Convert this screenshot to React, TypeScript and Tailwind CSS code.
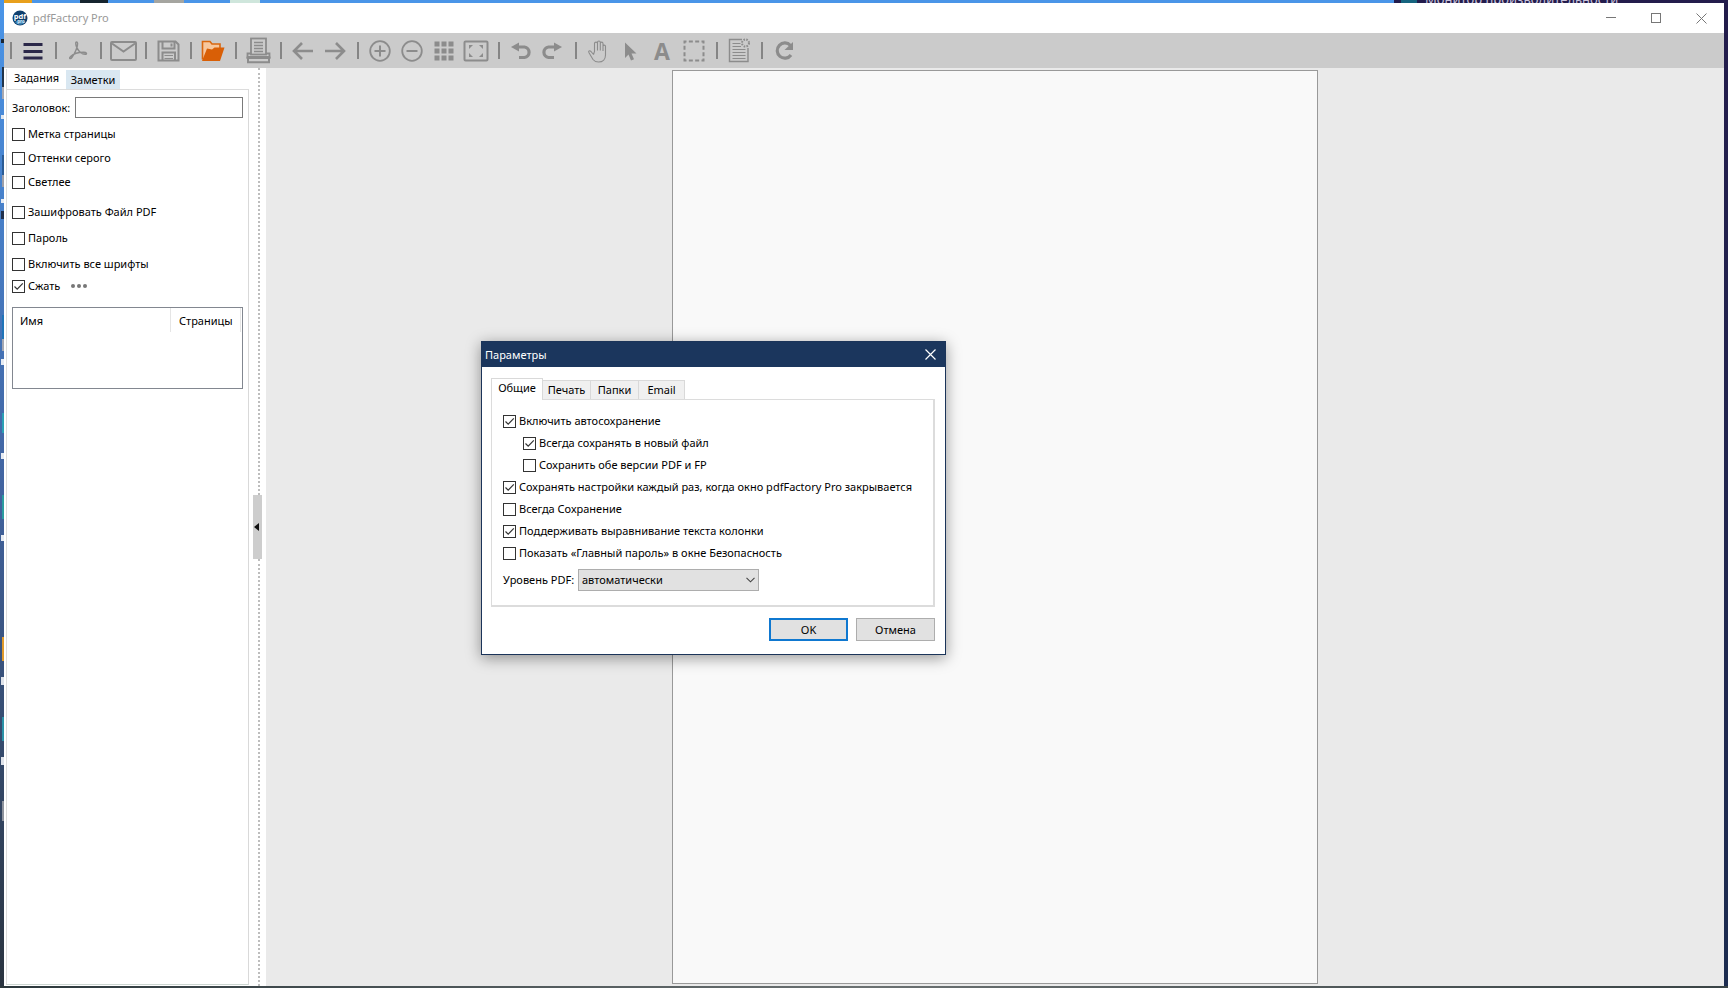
import React, { useState } from 'react';

const ICON = '#8c8c8c';

type CheckProps = {
  id: string;
  label: string;
  checked?: boolean;
  className?: string;
};

// Square checkbox with the thin Windows 10 tick
const Check: React.FC<CheckProps> = ({ id, label, checked = false, className = '' }) => {
  const [on, setOn] = useState<boolean>(checked);
  return (
    <div className={`flex items-center gap-[3px] ${className}`}>
      <span className="relative flex">
        <input
          id={id}
          type="checkbox"
          checked={on}
          onChange={(e) => setOn(e.target.checked)}
          className="h-[13px] w-[13px] appearance-none border border-[#333333] bg-white"
        />
        {on && (
          <svg className="pointer-events-none absolute inset-0" width="13" height="13" viewBox="0 0 13 13" fill="none">
            <path d="M2.5 6.5 L5.2 9.2 L10.8 3.4" stroke="#333" strokeWidth="1.2" />
          </svg>
        )}
      </span>
      <label htmlFor={id} className="whitespace-nowrap">{label}</label>
    </div>
  );
};

const Separator = () => (
  <span className="flex w-[13px] shrink-0 justify-center">
    <span className="h-[17px] w-[2px] bg-[#858585]" />
  </span>
);

type ToolProps = { title: string; children: React.ReactNode };

const Tool: React.FC<ToolProps> = ({ title, children }) => (
  <button type="button" aria-label={title} className="flex h-[35px] w-8 shrink-0 items-center justify-center">
    <svg width="28" height="28" viewBox="0 0 28 28" fill="none" stroke={ICON} strokeWidth="2" className="overflow-visible">
      {children}
    </svg>
  </button>
);

const Logo = () => (
  <svg width="16" height="16" viewBox="0 0 16 16">
    <circle cx="8" cy="8" r="7.5" fill="#10406e" />
    <path d="M3 12 C5 9.5 11 9.5 13 12 C11 15.5 5 15.5 3 12" fill="#3e83b5" />
    <text x="8" y="8.5" textAnchor="middle" fontSize="7.5" fontWeight="bold" fill="#fff" fontFamily="Open Sans, sans-serif">pdf</text>
    <text x="9" y="13" textAnchor="middle" fontSize="4.5" fontWeight="bold" fill="#d5e8f5" fontFamily="Open Sans, sans-serif">pro</text>
  </svg>
);

const Toolbar = () => (
  <div className="flex h-[35px] shrink-0 items-center bg-[#cbcbcb]">
    <Separator />
    <Tool title="Меню">
      <path d="M4.500 7.500H23.500M4.500 14.500H23.500M4.500 21H23.500" stroke="#2b2849" strokeWidth="3" />
    </Tool>
    <Separator />
    <Tool title="PDF">
      <path d="M12.500 5c-1.300 0-.8 3 .4 5.600 1.600 3.400 4.700 6.600 8.300 6.600 2.300 0 1.400-2-1.600-2-4.500 0-10.500 1.800-13 4.200-2.200 2.200-.2 3.200 1.600.6C10.500 17.200 14 9.500 13.600 6.300 13.500 5.400 13.100 5 12.500 5z" strokeWidth="1.400" />
    </Tool>
    <Separator />
    <Tool title="Email">
      <rect x="2" y="5" width="25" height="18" rx="1" />
      <path d="M3 6.500L14.500 14.500L26 6.500" />
    </Tool>
    <Separator />
    <Tool title="Сохранить">
      <path d="M4.500 4.500H21.500L24.500 7.500V23.500H4.500Z" />
      <path d="M8.500 5V11.500H20.500V5" />
      <path d="M17.500 6.500V9.500" />
      <path d="M8.500 23V15.500H21V23" />
      <path d="M10.500 18.500H19M10.500 21.500H19" strokeWidth="1.200" />
    </Tool>
    <Separator />
    <Tool title="Открыть">
      <path d="M3.500 22.500V4.500H11L13 7H21V11" stroke="#d9670f" strokeWidth="1.600" fill="#f7c79d" />
      <path d="M8 11.500L13 12.500L15.500 10.500H25.500L21 24H3Z" fill="#d95f06" stroke="none" />
    </Tool>
    <Separator />
    <Tool title="Печать">
      <rect x="7" y="1.500" width="15" height="16" strokeWidth="1.800" />
      <path d="M10 5.500H19M10 8.500H19M10 11.500H19M10 14.500H19" strokeWidth="1.300" />
      <path d="M7 16.500H3.500V20H25.500V16.500H22" strokeWidth="1.800" />
      <path d="M4 22V25.200H25V22" strokeWidth="2" />
      <path d="M2.500 20.800H26.500" strokeWidth="2.400" />
    </Tool>
    <Separator />
    <Tool title="Назад">
      <path d="M24 14H5M13 6L5 14L13 22" strokeWidth="2.600" />
    </Tool>
    <Tool title="Вперёд">
      <path d="M4 14H23M15 6L23 14L15 22" strokeWidth="2.600" />
    </Tool>
    <Separator />
    <Tool title="Увеличить">
      <circle cx="14" cy="14" r="9.800" strokeWidth="1.800" />
      <path d="M8.500 14H19.500M14 8.500V19.500" />
    </Tool>
    <Tool title="Уменьшить">
      <circle cx="14" cy="14" r="9.800" strokeWidth="1.800" />
      <path d="M8.500 14H19.500" />
    </Tool>
    <Tool title="Сетка">
      <path d="M4.500 7H23.500M4.500 14H23.500M4.500 21H23.500" strokeWidth="5" strokeDasharray="5 2" />
    </Tool>
    <Tool title="По размеру окна">
      <rect x="2.500" y="4.500" width="23" height="19" rx="1" />
      <path d="M7 8H11L7 12ZM21 8V12L17 8ZM7 20V16L11 20ZM21 20H17L21 16Z" fill={ICON} stroke="none" />
    </Tool>
    <Separator />
    <Tool title="Отменить">
      <path d="M4 10L12 5.500V14.500Z" fill={ICON} stroke="none" />
      <path d="M11 10H17.500A5.300 5.300 0 0 1 17.500 20.500H12" strokeWidth="3.200" />
    </Tool>
    <Tool title="Повторить">
      <path d="M23 10L15 5.500V14.500Z" fill={ICON} stroke="none" />
      <path d="M16 10H9.500A5.300 5.300 0 0 0 9.500 20.500H15" strokeWidth="3.200" />
    </Tool>
    <Separator />
    <Tool title="Рука">
      <path d="M9.500 17.500L7 14.500C5.500 13 4 14.200 5 15.800L9 22.500C10.500 24.500 12 25 14.500 25C19 25 21.500 22 21.500 18V9.500C21.500 7.700 19 7.700 19 9.500V14M19 10V6.500C19 4.700 16.300 4.700 16.300 6.500V13.500M16.300 7V5.500C16.300 3.500 13.500 3.500 13.500 5.500V13.500M13.500 6.500C13.500 4.700 10.500 4.700 10.500 6.500V14.500L9.500 17.500" strokeWidth="1.100" />
    </Tool>
    <Tool title="Выделение">
      <path d="M9 5.500V21L12.500 17.500L15 23.500L18 22.300L15.500 16.500H20.500Z" fill={ICON} stroke="none" />
    </Tool>
    <Tool title="Текст">
      <text x="14" y="22.500" textAnchor="middle" fontSize="23" fontWeight="bold" fill={ICON} stroke="none" fontFamily="Open Sans, sans-serif">A</text>
    </Tool>
    <Tool title="Область">
      <rect x="4.500" y="4.500" width="19" height="19" strokeDasharray="4 2.333" strokeDashoffset="2" />
    </Tool>
    <Separator />
    <Tool title="Заметка">
      <path d="M17 2.500H4.500V24.500H23V11" strokeWidth="1.400" />
      <path d="M7.500 6.500H15.500M7.500 9.500H16M7.500 12.500H20.500M7.500 15.500H20.500M7.500 18.500H20.500M7.500 21.500H20.500" strokeWidth="1.200" />
      <circle cx="20.500" cy="6" r="3.500" strokeDasharray="1.600 1.200" />
    </Tool>
    <Separator />
    <Tool title="Обновить">
      <path d="M20.500 8.500A7.600 7.600 0 1 0 21 18" strokeWidth="3.200" />
      <path d="M23 5V13H14.500Z" fill={ICON} stroke="none" />
    </Tool>
  </div>
);

const Sidebar = () => (
  <aside className="flex w-[245px] shrink-0 flex-col pl-0.5 pt-px">
    <div className="flex h-5 shrink-0 items-end">
      <button type="button" className="h-5 w-[60px] border-l border-[#dcdcdc] pb-0.5">Задания</button>
      <button type="button" className="h-[19px] w-[54px] bg-[#d9e7f1]">Заметки</button>
    </div>
    <div className="mb-px flex flex-1 flex-col border border-t-[#dcdcdc] border-r-[#d9d9d9] border-b-[#ccd6d1] border-l-[#dcdcdc] pl-[5px] pr-[5px] pt-[7px]">
      <div className="flex items-center gap-1">
        <label htmlFor="title" className="w-[59px] whitespace-nowrap">Заголовок:</label>
        <input id="title" type="text" className="h-[21px] min-w-0 flex-1 border border-[#7a7a7a] px-1 outline-none" />
      </div>
      <Check id="page-mark" label="Метка страницы" className="mt-2 h-4" />
      <Check id="gray" label="Оттенки серого" className="mt-2 h-4" />
      <Check id="lighter" label="Светлее" className="mt-2 h-4" />
      <Check id="encrypt" label="Зашифровать Файл PDF" className="mt-3.5 h-4" />
      <Check id="password" label="Пароль" className="mt-2.5 h-4" />
      <Check id="fonts" label="Включить все шрифты" className="mt-2.5 h-4" />
      <div className="mt-1.5 flex h-4 items-center gap-[11px]">
        <Check id="compress" label="Сжать" checked />
        <button type="button" aria-label="Параметры сжатия" className="flex gap-0.5">
          <span className="h-1 w-1 rounded-full bg-[#777]" />
          <span className="h-1 w-1 rounded-full bg-[#777]" />
          <span className="h-1 w-1 rounded-full bg-[#777]" />
        </button>
      </div>
      <div className="mt-[13px] h-[82px] border border-[#828790] pr-px">
        <table className="w-full table-fixed border-collapse text-left">
          <thead>
            <tr className="h-6">
              <th className="border-r border-[#e5e5e5] pl-[7px] pt-0.5 font-normal">Имя</th>
              <th className="w-[70px] border-r border-[#e5e5e5] pl-2 pt-0.5 font-normal">Страницы</th>
            </tr>
          </thead>
          <tbody />
        </table>
      </div>
    </div>
  </aside>
);

const Splitter = () => (
  <div className="flex w-[17px] shrink-0 flex-col items-center">
    <span className="ml-[3px] w-0 flex-1 border-l-2 border-dotted border-[#bdbdbd]" />
    <button type="button" aria-label="Свернуть панель" className="flex h-16 w-[9px] items-center justify-start bg-[#cdcdcd] pl-px">
      <svg width="5" height="8" viewBox="0 0 5 8"><path d="M5 0V8L0 4Z" fill="#111" /></svg>
    </button>
    <span className="ml-[3px] w-0 flex-1 border-l-2 border-dotted border-[#bdbdbd]" />
  </div>
);

const tabClass = 'h-[19px] border-t border-r border-[#d9d9d9] bg-[#f0f0f0]';

const SettingsDialog = () => (
  <div
    role="dialog"
    aria-label="Параметры"
    className="absolute left-[481px] top-[341px] w-[465px] border border-[#1b3459] bg-white shadow-[0_3px_14px_rgba(0,0,0,0.4)]"
  >
    <header className="flex h-[25px] items-center justify-between bg-[#1b365d] pl-[3px] pr-[9px] text-white">
      <h2>Параметры</h2>
      <button type="button" aria-label="Закрыть">
        <svg width="11" height="11" viewBox="0 0 11 11" stroke="#fff" strokeWidth="1.200"><path d="M.5 .5L10.500 10.500M10.500 .5L.5 10.500" /></svg>
      </button>
    </header>
    <div className="pb-[13px] pl-[9px] pr-2.5 pt-[11px]">
      <div className="flex items-end">
        <button type="button" className="-mb-px h-[22px] w-[52px] border-l border-r border-t border-[#d9d9d9] bg-white pb-1">Общие</button>
        <button type="button" className={`${tabClass} w-12`}>Печать</button>
        <button type="button" className={`${tabClass} w-12`}>Папки</button>
        <button type="button" className={`${tabClass} w-[46px]`}>Email</button>
      </div>
      <div className="border border-b-2 border-r-2 border-[#dcdcdc] pb-3.5 pl-[11px] pt-2.5">
        <Check id="autosave" label="Включить автосохранение" checked className="h-[22px]" />
        <Check id="new-file" label="Всегда сохранять в новый файл" checked className="ml-5 h-[22px]" />
        <Check id="both" label="Сохранить обе версии PDF и FP" className="ml-5 h-[22px]" />
        <Check id="keep" label="Сохранять настройки каждый раз, когда окно pdfFactory Pro закрывается" checked className="h-[22px]" />
        <Check id="always" label="Всегда Сохранение" className="h-[22px]" />
        <Check id="align" label="Поддерживать выравнивание текста колонки" checked className="h-[22px]" />
        <Check id="master" label="Показать «Главный пароль» в окне Безопасность" className="h-[22px]" />
        <div className="mt-[5px] flex items-center">
          <label htmlFor="level" className="w-[75px] whitespace-nowrap">Уровень PDF:</label>
          <span className="relative flex">
            <select id="level" className="h-[22px] w-[181px] appearance-none border border-[#adadad] bg-[#e1e1e1] pl-[3px]">
              <option>автоматически</option>
            </select>
            <svg className="pointer-events-none absolute right-1 top-2" width="9" height="6" viewBox="0 0 9 6" fill="none" stroke="#444" strokeWidth="1.100">
              <path d="M.5 .8L4.500 4.800L8.500 .8" />
            </svg>
          </span>
        </div>
      </div>
      <div className="mt-[11px] flex justify-end gap-2">
        <button type="button" className="h-[23px] w-[79px] border-2 border-[#0f78d0] bg-[#e1e1e1]">OK</button>
        <button type="button" className="h-[23px] w-[79px] border border-[#adadad] bg-[#e1e1e1]">Отмена</button>
      </div>
    </div>
  </div>
);

// sliver of wallpaper and shortcut icons left of the window
const DesktopEdge = () => (
  <div className="flex w-1 shrink-0 flex-col items-end overflow-hidden bg-linear-to-b from-[#4a95e8] via-[#41639f] to-[#2a3440]">
    <span className="mt-9 h-1 w-[3px] bg-[#1c2733]" />
    <span className="mt-6 h-5 w-0.5 bg-[#23354a]" />
    <span className="h-3 w-0.5 bg-[#a9a9b0]" />
    <span className="mt-4 h-1 w-[3px] bg-[#dfe6ee]" />
    <span className="mt-9 h-5 w-0.5 bg-[#2b5c95]" />
    <span className="h-3 w-0.5 bg-[#9d9fa8]" />
    <span className="mt-3 h-1 w-[3px] bg-[#e6ebf2]" />
    <span className="mt-2 h-2 w-[3px] bg-[#20304c]" />
    <span className="mt-24 h-6 w-0.5 bg-[#1f74b8]" />
    <span className="h-3 w-0.5 bg-[#a5a8b2]" />
    <span className="mt-2 h-1.5 w-[3px] bg-[#e6ebf2]" />
    <span className="mt-12 h-5 w-0.5 bg-[#2aa0b5]" />
    <span className="mt-5 h-1.5 w-[3px] bg-[#e6ebf2]" />
    <span className="mt-9 h-6 w-0.5 bg-[#2a9ca0]" />
    <span className="mt-4 h-1.5 w-[3px] bg-[#e6ebf2]" />
    <span className="mt-24 h-6 w-0.5 bg-[#e09a2c]" />
    <span className="mt-4 h-2 w-[3px] bg-[#dfe3ea]" />
    <span className="mt-8 h-6 w-0.5 bg-[#2a92a8]" />
    <span className="mt-4 h-2 w-[3px] bg-[#dfe3ea]" />
    <span className="mt-9 h-5 w-0.5 bg-[#8d929c]" />
  </div>
);

const App: React.FC = () => {
  return (
    <div className="relative flex h-screen min-h-[680px] flex-col overflow-hidden bg-[#231c4c] font-['Noto_Sans','Open_Sans',sans-serif] text-[11px] leading-4 text-black">
      {/* desktop strip above the window */}
      <div className="flex h-[3px] shrink-0 items-end overflow-hidden">
        <div className="flex h-full w-[1394px] shrink-0 bg-[#4a95e8]">
          <span className="ml-1 w-7 bg-[#e8a01c]" />
          <span className="ml-12 w-7 bg-[#16242e]" />
          <span className="ml-[46px] w-[30px] bg-[#a5a5a0]" />
          <span className="ml-[46px] w-[30px] bg-[#cfe6dc]" />
        </div>
        <span className="ml-[7px] h-full w-4 bg-[#16647f]" />
        <p className="ml-2 whitespace-nowrap text-[13px] leading-[8px] text-[#c9c3dc]">Монитор производительности</p>
      </div>

      <div className="flex min-h-0 flex-1">
        <DesktopEdge />
        <div className="flex min-w-0 flex-1 flex-col bg-white">
          <header className="flex h-[30px] shrink-0 items-center pl-2 pr-[17px]">
            <Logo />
            <h1 className="ml-[5px] flex-1 text-[#999]">pdfFactory Pro</h1>
            <div className="flex items-center gap-[35px] text-[#777]">
              <button type="button" aria-label="Свернуть">
                <svg width="10" height="10" viewBox="0 0 10 10" stroke="currentColor"><path d="M0 4.500H10" /></svg>
              </button>
              <button type="button" aria-label="Развернуть">
                <svg width="10" height="10" viewBox="0 0 10 10" fill="none" stroke="currentColor"><rect x=".5" y=".5" width="9" height="9" /></svg>
              </button>
              <button type="button" aria-label="Закрыть окно">
                <svg width="11" height="11" viewBox="0 0 11 11" stroke="currentColor"><path d="M.5 .5L10.500 10.500M10.500 .5L.5 10.500" /></svg>
              </button>
            </div>
          </header>
          <Toolbar />
          <div className="flex min-h-0 flex-1">
            <Sidebar />
            <Splitter />
            <main className="flex min-w-0 flex-1 justify-center bg-[#eaeaea] pb-0.5 pt-0.5">
              <div className="aspect-[210/297] h-full border border-[#999] bg-[#f9f9f9]" />
            </main>
          </div>
        </div>
        <div className="w-1 shrink-0 bg-linear-to-b from-[#231c4c] to-[#1c2c50]" />
      </div>
      <div className="h-0.5 shrink-0 bg-linear-to-r from-[#2c383c] via-[#6b7172] to-[#3a4446]" />

      <SettingsDialog />
    </div>
  );
};

export default App;
